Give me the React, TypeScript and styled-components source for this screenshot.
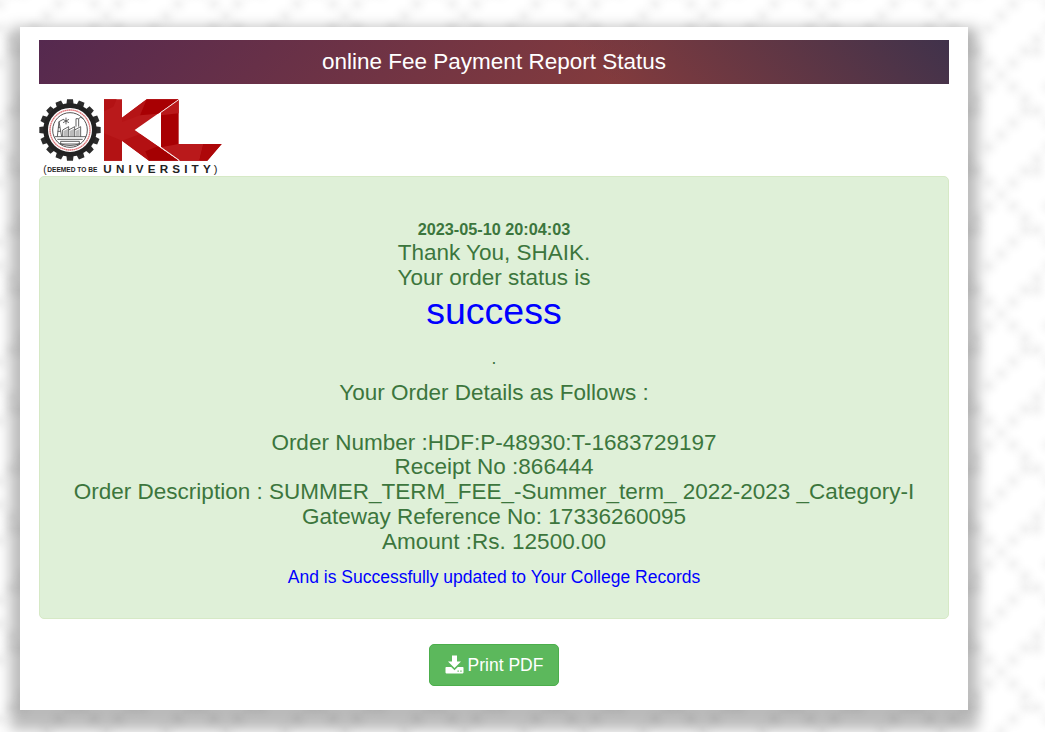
import React from "react";
import styled, { createGlobalStyle } from "styled-components";

const UNIT = 11.93;
const TILE = UNIT * 10;
const ORIGIN = { x: 106.4, y: 15.6 };

/* One knot of the woven backdrop, in grid units; it repeats at half a tile. */
const KNOT: [number, number][] = [
  [0, 0], [1, 1], [-1, -1], [1, -1], [-1, 1],
  [2, 2], [2, 3], [3, 3],
  [2, -2], [3, -2], [3, -3],
  [5, 0], [6, -1], [4, 1],
];
const dots = [...KNOT, ...KNOT.map(([x, y]) => [x + 5, y + 5] as [number, number])];
const dotImage =
  "radial-gradient(circle, rgba(0,0,0,.042) 0, rgba(0,0,0,.035) 3px, rgba(0,0,0,.021) 6px, rgba(0,0,0,.009) 9px, transparent 13px)";
const weaveImages = dots.map(() => dotImage).join(",");
const weavePositions = dots
  .map(([x, y]) => `${(ORIGIN.x + x * UNIT - TILE / 2).toFixed(2)}px ${(ORIGIN.y + y * UNIT - TILE / 2).toFixed(2)}px`)
  .join(",");

const GlobalStyle = createGlobalStyle`
  * { box-sizing: border-box; }
  body {
    margin: 0;
    overflow: hidden;
    font-family: "Liberation Sans", Arial, sans-serif;
    font-size: 17.5px;
  }
`;

const Page = styled.div`
  height: 732px;
  padding: 27px 77px 22px 20px;
  background-color: #fff;
  background-image: ${weaveImages};
  background-position: ${weavePositions};
  background-size: ${TILE}px ${TILE}px;
`;

const Card = styled.main`
  display: flex;
  flex-direction: column;
  height: 683px;
  padding: 13px 19px 24px;
  background: #fff;
  box-shadow: 0 10px 13px 10px rgba(0, 0, 0, 0.27);
`;

const Banner = styled.header`
  height: 44px;
  padding-top: 9px;
  text-align: center;
  font-size: 22.5px;
  line-height: 25.5px;
  color: #fff;
  background-image: linear-gradient(45deg, rgba(64, 50, 75, 0) 60%, #40324b 100%),
    linear-gradient(135deg, #55294f 0%, #833b3d 65%);
`;

const Logo = styled.svg`
  display: block;
  flex: none;
  width: 186px;
  height: 79px;
  margin-top: 13px;
`;

const Alert = styled.section`
  height: 443px;
  padding-top: 40px;
  border: 1px solid #d6e9c6;
  border-radius: 5px;
  background: #dff0d8;
  color: #3c763d;
  text-align: center;
`;

const Stamp = styled.div`
  font-size: 16.25px;
  font-weight: bold;
  line-height: 24px;
`;

const Line = styled.div<{ $before?: number }>`
  margin-top: ${(p) => p.$before ?? 0}px;
  font-size: 22.5px;
  line-height: 24.75px;
`;

const Status = styled.div`
  font-size: 37.5px;
  line-height: 41.25px;
  color: blue;
`;

const Note = styled.div<{ $before: number; $blue?: boolean }>`
  margin-top: ${(p) => p.$before}px;
  line-height: 25px;
  color: ${(p) => (p.$blue ? "blue" : "inherit")};
`;

const PrintButton = styled.button`
  display: flex;
  align-items: center;
  justify-content: center;
  align-self: center;
  gap: 4px;
  width: 130px;
  height: 42px;
  margin-top: 25px;
  padding: 0;
  border: 1px solid #4cae4c;
  border-radius: 5px;
  background: #5cb85c;
  color: #fff;
  font: inherit;

  svg {
    margin-top: -1px;
  }
`;

const TEETH = Array.from({ length: 16 }, (_, i) => i * 22.5);

function UniversityLogo() {
  return (
    <Logo viewBox="27 21 558 237" aria-label="KL University">
      <g transform="translate(120 120)">
        {TEETH.map((a) => (
          <path key={a} d="M-9 -92H9L11 -74H-11Z" fill="#2b2b2b" transform={`rotate(${a})`} />
        ))}
        <circle r="73" fill="#fff" stroke="#222" strokeWidth="14" />
        <circle r="60" fill="none" stroke="#dd7377" strokeWidth="4" strokeDasharray="5 1" />
        <circle r="52" fill="none" stroke="#333" strokeWidth="2.5" />
        <g fill="none" stroke="#444" strokeWidth="2.5">
          <path d="M-46 20H48M-38 28H38M-30 41Q0 52 30 41M-28 34H28V42H-28Z" />
          <path d="M-38 20L-33 -25L-25 20M-37 4H-28M-36 -8H-30M-33 -25L-20 -32" />
          <path d="M-22 20V0L-4 -10V20M-4 0L14 -10V20M14 0L32 -10V20M18 -10V-34H26V-10" />
          <path d="M-12 -37V-17M-21 -32L-3 -22M-21 -22L-3 -32M27 -35Q31 -42 40 -34" />
        </g>
        <path d="M-19 3L-6 -4V18H-19ZM-1 3L12 -4V18H-1ZM17 3L29 -4V18H17Z" fill="#bbb" />
      </g>
      <path d="M222 28H276V83L350 28H446L314 120L446 212H357L276 152V212H222Z" fill="#b9191b" />
      <path d="M276 83L350 28L330 76L276 96Z" fill="#b51416" />
      <path d="M350 28H446L384 71L330 76Z" fill="#a80003" />
      <path d="M276 152L330 132L384 169L357 212Z" fill="#b31012" />
      <path d="M357 212L346 184L384 169L446 212Z" fill="#a40002" />
      <path d="M222 28H260L250 50L222 64ZM222 130L276 152V212H222Z" fill="#b31214" />
      <path d="M393 67L446 29V162H575L532 212H450L393 172Z" fill="#a80003" />
      <path d="M393 67L446 29V70L393 76Z" fill="#b9191b" />
      <path d="M446 162L393 172L450 212H508L520 162Z" fill="#b9191b" />
      <path d="M520 162H575L532 212H508Z" fill="#ad0709" />
      <path d="M446 29L393 67M393 172L448 211" stroke="#fff" strokeWidth="2.5" />
      <g fill="#222" fontFamily="Liberation Sans, Arial, sans-serif">
        <text x="40" y="249" fontSize="30">(</text>
        <text x="52" y="246" fontSize="21" fontWeight="bold" textLength="150" lengthAdjust="spacingAndGlyphs">DEEMED TO BE</text>
        <text x="220" y="250" fontSize="35" fontWeight="bold" textLength="322">UNIVERSITY</text>
        <text x="551" y="250" fontSize="33">)</text>
      </g>
    </Logo>
  );
}

function DownloadIcon() {
  return (
    <svg width="19" height="19" viewBox="0 0 19 19" fill="#fff" aria-hidden="true">
      <path d="M7 0.5h5v6h4L9.5 13L3 6.5h4Z" />
      <path fillRule="evenodd" d="M1.2 12H6.2L9.5 15.2L12.8 12H17.8Q18.5 12 18.5 12.8V17.6Q18.5 18.4 17.7 18.4H1.3Q.5 18.4 .5 17.6V12.8Q.5 12 1.2 12ZM12.5 15.6V16.8H13.8V15.6ZM15.3 15.6V16.8H16.6V15.6Z" />
    </svg>
  );
}

export default function App() {
  return (
    <>
      <GlobalStyle />
      <Page>
        <Card>
          <Banner>online Fee Payment Report Status</Banner>
          <UniversityLogo />
          <Alert>
            <Stamp>2023-05-10 20:04:03</Stamp>
            <Line>Thank You, SHAIK.</Line>
            <Line>Your order status is</Line>
            <Status>success</Status>
            <Note $before={14}>.</Note>
            <Line $before={10}>Your Order Details as Follows :</Line>
            <Line $before={25}>Order Number :HDF:P-48930:T-1683729197</Line>
            <Line>Receipt No :866444</Line>
            <Line>Order Description : SUMMER_TERM_FEE_-Summer_term_ 2022-2023 _Category-I</Line>
            <Line>Gateway Reference No: 17336260095</Line>
            <Line>Amount :Rs. 12500.00</Line>
            <Note $before={11} $blue>And is Successfully updated to Your College Records</Note>
          </Alert>
          <PrintButton type="button">
            <DownloadIcon />
            Print PDF
          </PrintButton>
        </Card>
      </Page>
    </>
  );
}
